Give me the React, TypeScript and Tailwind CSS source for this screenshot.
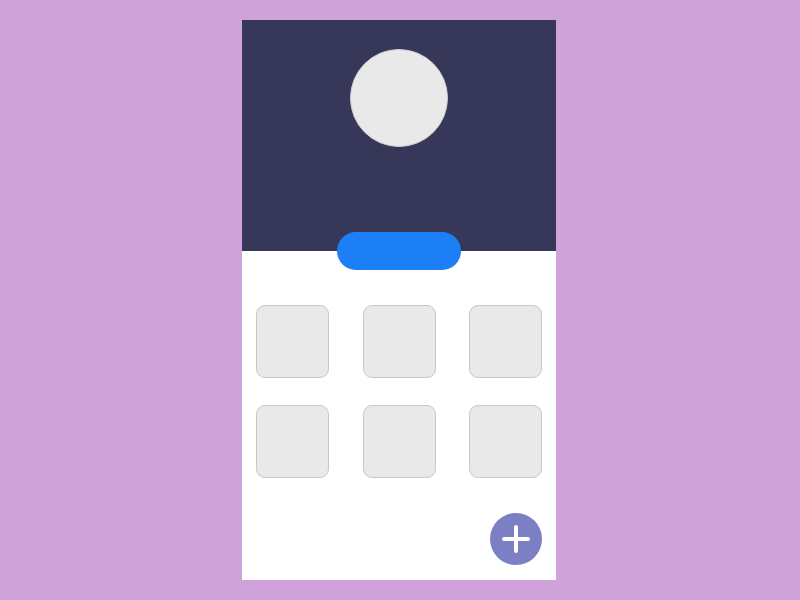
import React from 'react';

const rows = [
  [1, 2, 3],
  [4, 5, 6],
];

const App: React.FC = () => {
  return (
    <div className="w-[800px] h-[600px] bg-[#cfa3d9] pt-[20px]">
      <div className="relative ml-[242px] w-[314px] h-[560px] bg-white flex flex-col overflow-hidden">
        {/* header */}
        <div className="h-[231px] bg-[#363759] flex justify-center pt-[29px] shrink-0">
          <div className="w-[98px] h-[98px] rounded-full bg-[#e9e9e9] border border-[#cfcfd4]" />
        </div>

        {/* action pill */}
        <div className="flex justify-center -mt-[19px] relative z-10">
          <button className="w-[124px] h-[38px] rounded-full bg-[#1d7ff5]" />
        </div>

        {/* tiles */}
        <div className="flex flex-col gap-[27px] px-[14px] mt-[35px]">
          {rows.map((row, i) => (
            <div key={i} className="flex justify-between">
              {row.map((t) => (
                <div
                  key={t}
                  className="w-[73px] h-[73px] rounded-[9px] bg-[#e9e9e9] border border-[#c8c8c8]"
                />
              ))}
            </div>
          ))}
        </div>

        {/* fab */}
        <button className="absolute right-[14px] bottom-[15px] w-[52px] h-[52px] rounded-full bg-[#7b7fc4] flex items-center justify-center">
          <svg width="30" height="30" viewBox="0 0 30 30" fill="none">
            <path d="M15 3v24M3 15h24" stroke="white" strokeWidth="4" strokeLinecap="round" />
          </svg>
        </button>
      </div>
    </div>
  );
};

export default App;
